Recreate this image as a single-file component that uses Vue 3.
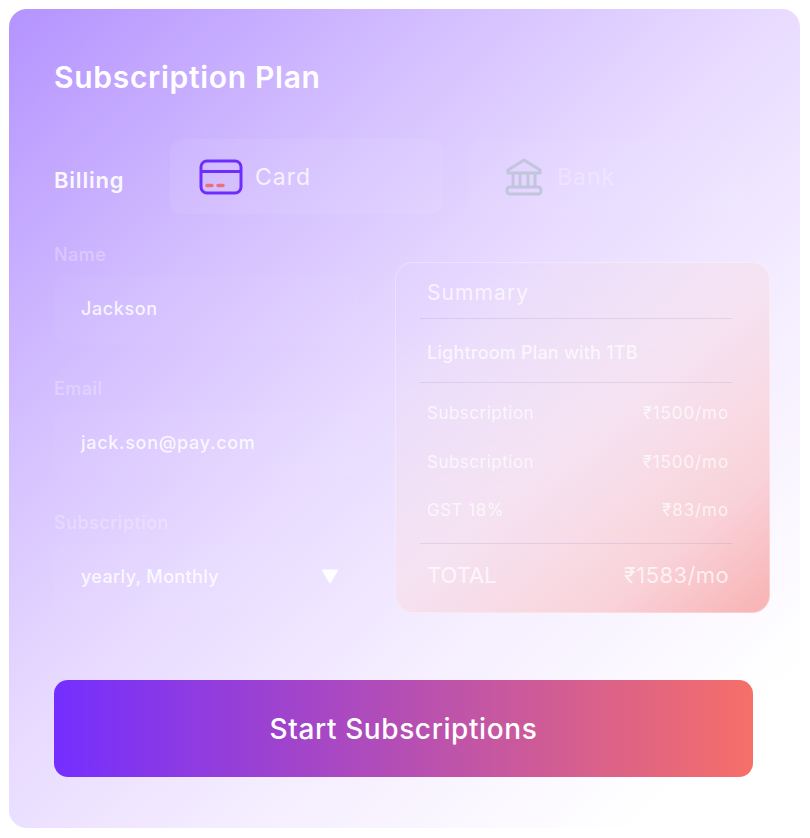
<script setup>
const fields = [
  { id: 'name', label: 'Name', value: 'Jackson', spacing: '0.6px' },
  { id: 'email', label: 'Email', value: 'jack.son@pay.com', spacing: '0.7px' },
  { id: 'plan', label: 'Subscription', value: 'yearly, Monthly', spacing: '0.35px', select: true },
]

const lines = [
  { id: 1, label: 'Subscription', price: '₹1500/mo' },
  { id: 2, label: 'Subscription', price: '₹1500/mo' },
  { id: 3, label: 'GST 18%', price: '₹83/mo' },
]
</script>

<template>
  <main class="page">
    <section class="card">
      <h1 class="title">Subscription Plan</h1>

      <div class="billing">
        <span class="billing-label">Billing</span>
        <div class="tab">
          <svg class="tab-icon" width="44" height="36" viewBox="0 0 44 36" fill="none">
            <rect x="2" y="2" width="40" height="32" rx="6" stroke="#6f2cff" stroke-width="3" />
            <line x1="2" y1="12.5" x2="42" y2="12.5" stroke="#6f2cff" stroke-width="3" />
            <line x1="8" y1="26.5" x2="13" y2="26.5" stroke="#ee6f7c" stroke-width="3.4" stroke-linecap="round" />
            <line x1="19" y1="26.5" x2="24" y2="26.5" stroke="#ee6f7c" stroke-width="3.4" stroke-linecap="round" />
          </svg>
          <span class="tab-text">Card</span>
        </div>
        <div class="tab tab-off">
          <svg class="tab-icon" width="38" height="38" viewBox="0 0 38 38" fill="none" stroke="#c2c6dc" stroke-width="3" stroke-linejoin="round">
            <path d="M19 2 L35 12 V15 H3 V12 Z" />
            <line x1="8" y1="15" x2="8" y2="29" />
            <line x1="15" y1="15" x2="15" y2="29" />
            <line x1="23" y1="15" x2="23" y2="29" />
            <line x1="30" y1="15" x2="30" y2="29" />
            <rect x="2" y="29" width="34" height="7" rx="3" />
          </svg>
          <span class="tab-text tab-text-off">Bank</span>
        </div>
      </div>

      <div class="columns">
        <form class="form">
          <div v-for="field in fields" :key="field.id" class="field">
            <label class="field-label">{{ field.label }}</label>
            <div class="input">
              <span :style="{ letterSpacing: field.spacing }">{{ field.value }}</span>
              <svg v-if="field.select" class="arrow" width="18" height="15" viewBox="0 0 18 15">
                <path d="M2 1.5 H16 L9 13 Z" fill="#fff" stroke="#fff" stroke-width="2" stroke-linejoin="round" />
              </svg>
            </div>
          </div>
        </form>

        <aside class="summary">
          <h2 class="summary-title">Summary</h2>
          <p class="plan-name">Lightroom Plan with 1TB</p>
          <div class="lines">
            <div v-for="line in lines" :key="line.id" class="line">
              <span>{{ line.label }}</span>
              <span class="price">{{ line.price }}</span>
            </div>
          </div>
          <div class="total">
            <span>TOTAL</span>
            <span class="total-price">₹1583/mo</span>
          </div>
        </aside>
      </div>

      <button class="start" type="button">Start Subscriptions</button>
    </section>
  </main>
</template>

<style>
html,
body {
  margin: 0;
  background: #fff;
}
</style>

<style scoped>
.page {
  width: 810px;
  height: 838px;
  padding: 9px 10px 10px 9px;
  box-sizing: border-box;
  font-family: Inter, "Noto Sans", sans-serif;
}

.card {
  height: 100%;
  box-sizing: border-box;
  padding: 50px 47px 0 45px;
  border-radius: 18px;
  background: linear-gradient(136deg, #b493ff 0%, #d4bfff 27%, #e8dbff 47%, #f5eeff 66%, #ffffff 90%);
}

.title {
  margin: 0;
  height: 37px;
  font-size: 30px;
  line-height: 37px;
  font-weight: 600;
  letter-spacing: 0.7px;
  color: #fff;
}

.billing {
  display: flex;
  align-items: center;
  margin-top: 43px;
}

.billing-label {
  width: 116px;
  padding-top: 7px;
  font-size: 22px;
  font-weight: 600;
  letter-spacing: 0.8px;
  color: #fff;
  opacity: 0.92;
}

.tab {
  display: flex;
  align-items: center;
  gap: 12px;
  width: 273px;
  height: 75px;
  flex: none;
  box-sizing: border-box;
  padding-left: 29px;
  border-radius: 12px;
  background: rgba(255, 255, 255, 0.07);
}

.tab-off {
  margin-left: 27px;
  padding-left: 35px;
  background: rgba(255, 255, 255, 0.04);
  gap: 14px;
}

.tab-text {
  font-size: 23px;
  letter-spacing: 1px;
  color: rgba(255, 255, 255, 0.8);
}

.tab-text-off {
  color: rgba(255, 255, 255, 0.3);
}

.columns {
  display: flex;
  align-items: flex-start;
  margin-top: 29px;
}

.form {
  width: 304px;
  flex: none;
}

.field {
  height: 134px;
}

.field-label {
  display: block;
  height: 33px;
  font-size: 18px;
  line-height: 24px;
  font-weight: 500;
  letter-spacing: 0.5px;
  color: rgba(255, 255, 255, 0.3);
}

.input {
  display: flex;
  align-items: center;
  justify-content: space-between;
  height: 67px;
  box-sizing: border-box;
  padding: 0 19px 2px 27px;
  border-radius: 10px;
  font-size: 18px;
  font-weight: 500;
  color: rgba(255, 255, 255, 0.85);
  background: rgba(255, 255, 255, 0.03);
}

.summary {
  width: 375px;
  height: 351px;
  flex: none;
  box-sizing: border-box;
  margin: 19px 0 0 37px;
  padding: 0 37px 0 24px;
  border: 1.5px solid rgba(255, 255, 255, 0.3);
  border-radius: 18px;
  color: rgba(255, 255, 255, 0.72);
  background: linear-gradient(140deg, rgba(225, 212, 255, 0.15) 10%, rgba(245, 225, 240, 0.85) 50%, #f9d3da 78%, #f8b2b3 100%) border-box;
}

.summary-title {
  margin: 0;
  height: 56px;
  padding-left: 7px;
  box-sizing: border-box;
  font-size: 21px;
  line-height: 59px;
  font-weight: 400;
  letter-spacing: 1.1px;
  border-bottom: 1px solid rgba(130, 110, 190, 0.16);
}

.plan-name {
  margin: 0;
  height: 64px;
  padding-left: 7px;
  box-sizing: border-box;
  font-size: 18px;
  line-height: 67px;
  font-weight: 500;
  letter-spacing: 0.2px;
  border-bottom: 1px solid rgba(130, 110, 190, 0.16);
}

.lines {
  display: flex;
  flex-direction: column;
  gap: 24.5px;
  height: 161px;
  box-sizing: border-box;
  padding: 18px 3px 0 7px;
  border-bottom: 1px solid rgba(130, 110, 190, 0.16);
}

.line {
  display: flex;
  justify-content: space-between;
  font-size: 17px;
  line-height: 24px;
  letter-spacing: 0.5px;
}

.price {
  letter-spacing: 0.9px;
}

.total {
  display: flex;
  justify-content: space-between;
  padding: 17px 3px 0 7px;
  font-size: 22px;
  line-height: 28px;
}

.total-price {
  letter-spacing: 0.4px;
}

.start {
  display: block;
  width: 699px;
  height: 97px;
  margin-top: 35px;
  border: 0;
  border-radius: 14px;
  font-family: inherit;
  font-size: 28px;
  font-weight: 500;
  letter-spacing: 0.6px;
  color: #fff;
  background: linear-gradient(90deg, #742eff 0%, #f66f69 100%);
}
</style>
